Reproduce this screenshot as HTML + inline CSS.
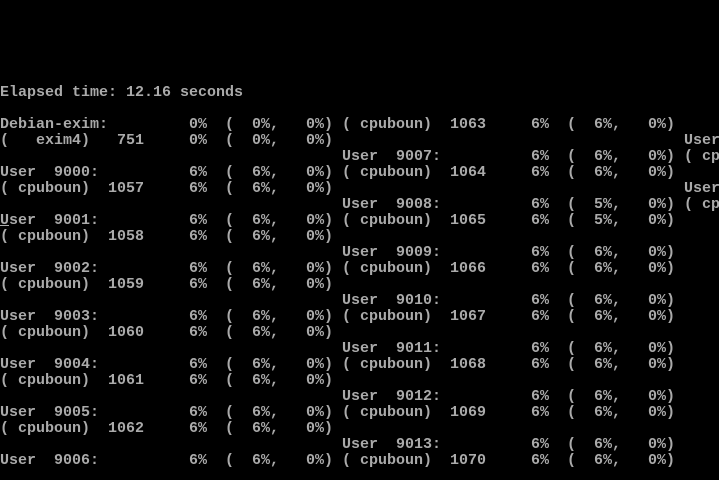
<!DOCTYPE html>
<html><head><meta charset="utf-8"><style>
html,body{margin:0;padding:0;background:#000;}
body{width:719px;height:477px;overflow:hidden;position:relative;}
.w{position:absolute;left:0;top:3px;width:719px;height:477px;}
.r{position:absolute;left:0;height:16px;width:719px;}
.r span{position:absolute;top:0;white-space:pre;font-family:"Liberation Mono","DejaVu Sans Mono",monospace;font-size:15px;line-height:16px;color:#aaa;font-weight:bold;letter-spacing:0;}
.a{left:0}.b{left:342px}.c{left:684px}
.cur{text-decoration:underline;}
</style></head><body><div class="w">
<div class="r" style="top:82px"><span class="a">Elapsed time: 12.16 seconds</span></div>
<div class="r" style="top:114px"><span class="a">Debian-exim:         0%  (  0%,   0%)</span><span class="b">( cpuboun)  1063     6%  (  6%,   0%)</span></div>
<div class="r" style="top:130px"><span class="a">(   exim4)   751     0%  (  0%,   0%)</span><span class="c">User</span></div>
<div class="r" style="top:146px"><span class="b">User  9007:          6%  (  6%,   0%)</span><span class="c">( cp</span></div>
<div class="r" style="top:162px"><span class="a">User  9000:          6%  (  6%,   0%)</span><span class="b">( cpuboun)  1064     6%  (  6%,   0%)</span></div>
<div class="r" style="top:178px"><span class="a">( cpuboun)  1057     6%  (  6%,   0%)</span><span class="c">User</span></div>
<div class="r" style="top:194px"><span class="b">User  9008:          6%  (  5%,   0%)</span><span class="c">( cp</span></div>
<div class="r" style="top:210px"><span class="a"><span class="cur" style="position:static">U</span>ser  9001:          6%  (  6%,   0%)</span><span class="b">( cpuboun)  1065     6%  (  5%,   0%)</span></div>
<div class="r" style="top:226px"><span class="a">( cpuboun)  1058     6%  (  6%,   0%)</span></div>
<div class="r" style="top:242px"><span class="b">User  9009:          6%  (  6%,   0%)</span></div>
<div class="r" style="top:258px"><span class="a">User  9002:          6%  (  6%,   0%)</span><span class="b">( cpuboun)  1066     6%  (  6%,   0%)</span></div>
<div class="r" style="top:274px"><span class="a">( cpuboun)  1059     6%  (  6%,   0%)</span></div>
<div class="r" style="top:290px"><span class="b">User  9010:          6%  (  6%,   0%)</span></div>
<div class="r" style="top:306px"><span class="a">User  9003:          6%  (  6%,   0%)</span><span class="b">( cpuboun)  1067     6%  (  6%,   0%)</span></div>
<div class="r" style="top:322px"><span class="a">( cpuboun)  1060     6%  (  6%,   0%)</span></div>
<div class="r" style="top:338px"><span class="b">User  9011:          6%  (  6%,   0%)</span></div>
<div class="r" style="top:354px"><span class="a">User  9004:          6%  (  6%,   0%)</span><span class="b">( cpuboun)  1068     6%  (  6%,   0%)</span></div>
<div class="r" style="top:370px"><span class="a">( cpuboun)  1061     6%  (  6%,   0%)</span></div>
<div class="r" style="top:386px"><span class="b">User  9012:          6%  (  6%,   0%)</span></div>
<div class="r" style="top:402px"><span class="a">User  9005:          6%  (  6%,   0%)</span><span class="b">( cpuboun)  1069     6%  (  6%,   0%)</span></div>
<div class="r" style="top:418px"><span class="a">( cpuboun)  1062     6%  (  6%,   0%)</span></div>
<div class="r" style="top:434px"><span class="b">User  9013:          6%  (  6%,   0%)</span></div>
<div class="r" style="top:450px"><span class="a">User  9006:          6%  (  6%,   0%)</span><span class="b">( cpuboun)  1070     6%  (  6%,   0%)</span></div>
</div></body></html>
